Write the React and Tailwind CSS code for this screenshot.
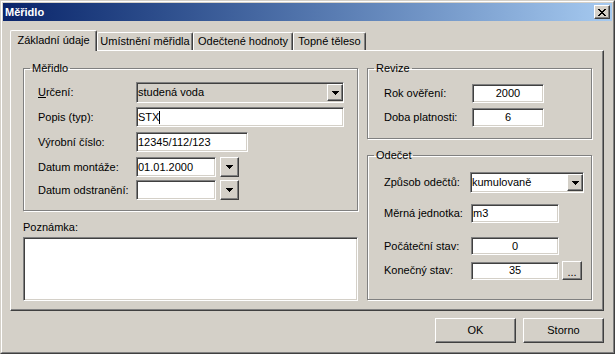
import React from "react";

const sunken =
  "border border-t-[#808080] border-l-[#808080] border-b-white border-r-white shadow-[inset_1px_1px_#404040,inset_-1px_-1px_#d4d0c8]";
const raised =
  "border border-t-white border-l-white border-b-[#404040] border-r-[#404040] shadow-[inset_-1px_-1px_#808080]";
const etched =
  "border border-[#808080] shadow-[inset_1px_1px_white,1px_1px_white]";

function Tri() {
  return (
    <svg width="7" height="4" viewBox="0 0 7 4" shapeRendering="crispEdges">
      <rect x="0" y="0" width="7" height="1" fill="#000" />
      <rect x="1" y="1" width="5" height="1" fill="#000" />
      <rect x="2" y="2" width="3" height="1" fill="#000" />
      <rect x="3" y="3" width="1" height="1" fill="#000" />
    </svg>
  );
}

function CloseX() {
  const rows = [
    [0, 2, 6, 2],
    [1, 2, 5, 2],
    [2, 4],
    [3, 2],
    [2, 4],
    [1, 2, 5, 2],
    [0, 2, 6, 2],
  ];
  return (
    <svg width="8" height="7" viewBox="0 0 8 7" shapeRendering="crispEdges">
      {rows.map((r, y) => (
        <g key={y}>
          <rect x={r[0]} y={y} width={r[1]} height="1" fill="#000" />
          {r.length > 2 && <rect x={r[2]} y={y} width={r[3]} height="1" fill="#000" />}
        </g>
      ))}
    </svg>
  );
}

function DropBtn({ className = "" }) {
  return (
    <div className={`${raised} bg-[#d4d0c8] flex items-center justify-center ${className}`}>
      <Tri />
    </div>
  );
}

function Field({ w, h = 20, children, center = false, bg = "bg-white", caret = false }) {
  return (
    <div
      className={`${sunken} ${bg} ${w} flex items-center ${center ? "justify-center" : "pl-[1px]"}`}
      style={{ height: h }}
    >
      <span className="whitespace-nowrap">{children}</span>
      {caret && <span className="w-px h-[13px] bg-black" />}
    </div>
  );
}

function Combo({ w, value, bg = "bg-white" }) {
  return (
    <div className={`${sunken} ${bg} ${w} h-[21px] flex items-center`}>
      <span className="pl-[1px] flex-1 whitespace-nowrap">{value}</span>
      <DropBtn className="w-[16px] h-[17px]" />
    </div>
  );
}

function Tab({ label, selected, w }) {
  if (selected)
    return (
      <div
        className={`${w} h-[21px] -mb-px relative z-10 bg-[#d4d0c8] border-t border-l border-r border-t-white border-l-white border-r-[#404040] rounded-tl-[2px] rounded-tr-[2px] shadow-[inset_-1px_0_#808080] flex justify-center pt-[3px] whitespace-nowrap`}
      >
        {label}
      </div>
    );
  return (
    <div
      className={`${w} h-[18px] bg-[#d4d0c8] border-t border-l border-r border-t-white border-l-white border-r-[#404040] rounded-tl-[2px] rounded-tr-[2px] shadow-[inset_-1px_0_#808080] flex justify-center pt-[2px] whitespace-nowrap`}
    >
      {label}
    </div>
  );
}

export default function App() {
  return (
    <div className="w-[615px] h-[354px] bg-[#d4d0c8] border border-t-[#d4d0c8] border-l-[#d4d0c8] border-r-[#404040] border-b-[#404040] font-['Liberation_Sans',Arial,sans-serif] text-[11px] leading-[13px] text-black select-none">
      <div className="h-full border border-t-white border-l-white border-r-[#808080] border-b-[#808080] p-px flex flex-col">
        {/* Title bar */}
        <div className="h-[18px] bg-linear-to-r from-[#0a246a] to-[#a6caf0] flex items-center justify-between pl-[2px] pr-[2px]">
          <span className="text-white font-bold">Měřidlo</span>
          <div className={`${raised} bg-[#d4d0c8] w-[16px] h-[14px] flex items-center justify-center`}>
            <CloseX />
          </div>
        </div>

        {/* Tabs */}
        <div className="mt-[9px] ml-[7px] h-[20px] flex items-end">
          <Tab label="Základní údaje" selected w="w-[87px]" />
          <Tab label="Umístnění měřidla" w="w-[96px]" />
          <Tab label="Odečtené hodnoty" w="w-[100px]" />
          <Tab label="Topné těleso" w="w-[73px]" />
        </div>

        {/* Panel */}
        <div className="ml-[7px] w-[594px] h-[261px] border border-t-white border-l-white border-r-[#404040] border-b-[#404040] shadow-[inset_-1px_-1px_#808080] flex pl-[12px] gap-[9px]">
          {/* Left column */}
          <div className="w-[335px] flex flex-col">
            <fieldset className={`${etched} mt-[11px] h-[149px]`}>
              <legend className="ml-[6px] px-[2px]">Měřidlo</legend>
              <div className="pt-[7px] pl-[14px] flex flex-col">
                <div className="flex items-center h-[21px]">
                  <span className="w-[98px]">
                    <span className="underline">U</span>rčení:
                  </span>
                  <Combo w="w-[208px]" value="studená voda" bg="bg-[#d4d0c8]" />
                </div>
                <div className="flex items-center h-[20px] mt-[4px]">
                  <span className="w-[98px]">Popis (typ):</span>
                  <Field w="w-[208px]" caret>
                    STX
                  </Field>
                </div>
                <div className="flex items-center h-[20px] mt-[5px]">
                  <span className="w-[98px]">Výrobní číslo:</span>
                  <Field w="w-[112px]">12345/112/123</Field>
                </div>
                <div className="flex items-center h-[20px] mt-[5px]">
                  <span className="w-[98px]">Datum montáže:</span>
                  <Field w="w-[80px]">01.01.2000</Field>
                  <DropBtn className="w-[19px] h-[20px] ml-[4px]" />
                </div>
                <div className="flex items-center h-[20px] mt-[3px]">
                  <span className="w-[98px]">Datum odstranění:</span>
                  <Field w="w-[80px]"></Field>
                  <DropBtn className="w-[19px] h-[20px] ml-[4px]" />
                </div>
              </div>
            </fieldset>
            <div className="mt-[10px]">Poznámka:</div>
            <div className={`${sunken} bg-white mt-[3px] h-[64px] w-[335px]`} />
          </div>

          {/* Right column */}
          <div className="w-[225px] flex flex-col">
            <fieldset className={`${etched} mt-[11px] h-[77px]`}>
              <legend className="ml-[6px] px-[2px]">Revize</legend>
              <div className="pt-[9px] pl-[16px] flex flex-col">
                <div className="flex items-center h-[19px]">
                  <span className="w-[88px]">Rok ověření:</span>
                  <Field w="w-[72px]" h={19} center>
                    2000
                  </Field>
                </div>
                <div className="flex items-center h-[19px] mt-[5px]">
                  <span className="w-[88px]">Doba platnosti:</span>
                  <Field w="w-[72px]" h={19} center>
                    6
                  </Field>
                </div>
              </div>
            </fieldset>
            <fieldset className={`${etched} mt-[10px] h-[151px]`}>
              <legend className="ml-[6px] px-[2px]">Odečet</legend>
              <div className="pt-[10px] pl-[16px] flex flex-col">
                <div className="flex items-center h-[21px]">
                  <span className="w-[86px]">Způsob odečtů:</span>
                  <Combo w="w-[114px]" value="kumulovaně" />
                </div>
                <div className="flex items-center h-[19px] mt-[11px]">
                  <span className="w-[87px]">Měrná jednotka:</span>
                  <Field w="w-[88px]" h={19}>
                    m3
                  </Field>
                </div>
                <div className="flex items-center h-[18px] mt-[14px]">
                  <span className="w-[87px]">Počáteční stav:</span>
                  <Field w="w-[88px]" h={18} center>
                    0
                  </Field>
                </div>
                <div className="flex items-center h-[19px] mt-[6px]">
                  <span className="w-[87px]">Konečný stav:</span>
                  <Field w="w-[88px]" h={18} center>
                    35
                  </Field>
                  <div className={`${raised} bg-[#d4d0c8] w-[20px] h-[19px] ml-[3px] flex items-end justify-center pb-[3px] leading-[8px]`}>
                    ...
                  </div>
                </div>
              </div>
            </fieldset>
          </div>
        </div>

        {/* Buttons */}
        <div className="mt-[7px] flex justify-end gap-[7px] pr-[8px]">
          <div className={`${raised} bg-[#d4d0c8] w-[81px] h-[25px] flex items-center justify-center`}>OK</div>
          <div className={`${raised} bg-[#d4d0c8] w-[81px] h-[25px] flex items-center justify-center`}>Storno</div>
        </div>
      </div>
    </div>
  );
}
